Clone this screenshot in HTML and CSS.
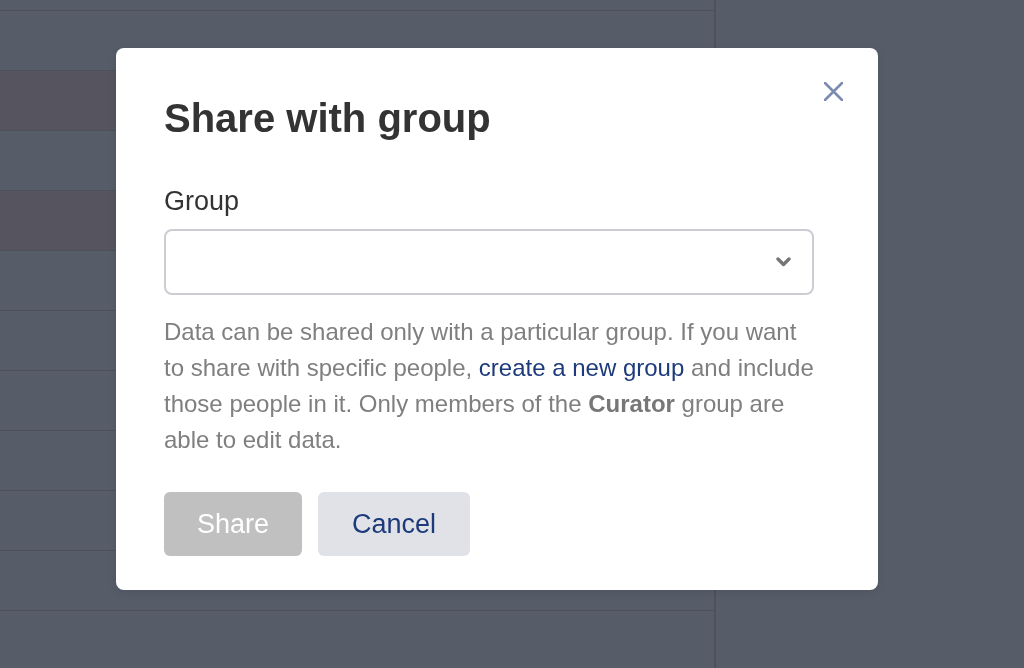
FILE: index.html
```html
<!DOCTYPE html>
<html lang="en">
<head>
<meta charset="utf-8">
<title>Share with group</title>
<link rel="stylesheet" href="styles.css">
</head>
<body>
<div class="page">
  <div class="table">
    <div class="row row-head"></div>
    <div class="row"></div>
    <div class="row row-alt"></div>
    <div class="row"></div>
    <div class="row row-alt"></div>
    <div class="row"></div>
    <div class="row"></div>
    <div class="row"></div>
    <div class="row"></div>
    <div class="row"></div>
    <div class="row"></div>
    <div class="row"></div>
  </div>
  <div class="side"></div>
</div>

<div class="overlay">
  <div class="modal" role="dialog" aria-labelledby="modal-title">
    <button class="close" aria-label="Close">
      <svg width="19" height="19" viewBox="0 0 19 19"><path d="M1 1 L18 18 M18 1 L1 18" stroke="#7b8bb1" stroke-width="2.6" stroke-linecap="round" fill="none"/></svg>
    </button>
    <h1 class="title" id="modal-title">Share with group</h1>
    <label class="label" for="group">Group</label>
    <div class="select" id="group">
      <svg class="chevron" width="15" height="10" viewBox="0 0 15 10"><path d="M2 2 L7.5 7.5 L13 2" stroke="#767676" stroke-width="3.4" stroke-linecap="round" stroke-linejoin="round" fill="none"/></svg>
    </div>
    <p class="help">Data can be shared only with a particular group. If you want to share with specific people, <a href="#" class="link">create a new group</a> and include those people in it. Only members of the <strong>Curator</strong> group are able to edit data.</p>
    <div class="actions">
      <button class="btn btn-share" disabled>Share</button>
      <button class="btn btn-cancel">Cancel</button>
    </div>
  </div>
</div>
</body>
</html>
```

FILE: styles.css
```css
* { box-sizing: border-box; }

html, body {
  margin: 0;
  padding: 0;
  height: 100%;
  overflow: hidden;
}

body {
  font-family: "Liberation Sans", Arial, Helvetica, sans-serif;
  background: #565c68;
}

.page {
  display: flex;
  height: 668px;
}

.table {
  width: 716px;
  border-right: 2px solid #4c515c;
  display: flex;
  flex-direction: column;
}

.row {
  height: 60px;
  flex: none;
  border-bottom: 1px solid #4c515c;
  background: #565c68;
}

.row-head { height: 11px; }

.row-alt { background: #55545f; }

.side {
  flex: 1;
  background: #565c68;
}

.overlay {
  position: fixed;
  inset: 0;
  padding: 48px 0 0 116px;
}

.modal {
  position: relative;
  width: 762px;
  height: 542px;
  background: #ffffff;
  border-radius: 8px;
  padding: 46px 64px 34px 48px;
  box-shadow: 0 2px 8px rgba(0, 0, 0, 0.08);
}

.close {
  position: absolute;
  top: 34px;
  right: 35px;
  width: 19px;
  height: 19px;
  padding: 0;
  border: 0;
  background: none;
  display: block;
}
.close svg { display: block; }

.title {
  margin: 0;
  font-size: 40px;
  line-height: 48px;
  font-weight: 700;
  color: #333333;
}

.label {
  display: block;
  margin-top: 43px;
  font-size: 27px;
  line-height: 32px;
  color: #333333;
}

.select {
  margin-top: 12px;
  height: 66px;
  border: 2px solid #cbcdd2;
  border-radius: 8px;
  display: flex;
  align-items: center;
  justify-content: flex-end;
  padding-right: 21px;
}
.chevron { display: block; }

.help {
  margin: 19px 0 0;
  font-size: 24px;
  line-height: 36px;
  color: #7f7f7f;
}

.link {
  color: #1d3a7b;
  text-decoration: none;
}

.help strong {
  font-weight: 700;
  color: #777777;
}

.actions {
  margin-top: 34px;
  display: flex;
  gap: 16px;
}

.btn {
  height: 64px;
  border: 0;
  border-radius: 6px;
  font-family: "Liberation Sans", Arial, Helvetica, sans-serif;
  font-size: 27px;
  padding: 0 32px;
}

.btn-share {
  width: 138px;
  background: #c0c0c0;
  color: #ffffff;
}

.btn-cancel {
  width: 152px;
  background: #e0e2e7;
  color: #1d3a7b;
}
```
